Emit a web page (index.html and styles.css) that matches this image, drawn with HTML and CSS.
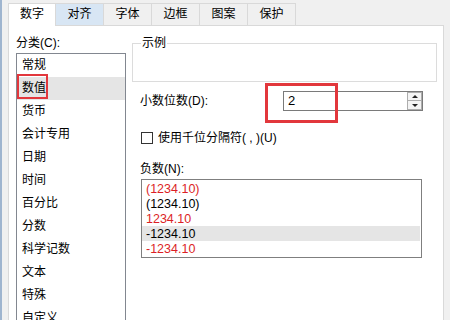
FILE: index.html
```html
<!DOCTYPE html>
<html>
<head>
    <title>设置单元格格式</title>
    <link rel="stylesheet" href="styles.css">
</head>
<body>
    <div class="window">
        <div class="tabs">
            <div class="tab active">数字</div>
            <div class="tab hover">对齐</div>
            <div class="tab">字体</div>
            <div class="tab">边框</div>
            <div class="tab">图案</div>
            <div class="tab">保护</div>
        </div>

        <div class="panel">
            <div class="category">
                <div class="label">分类(C):</div>
                <ul class="list cat-list">
                    <li>常规</li>
                    <li class="selected"><span class="mark small"></span>数值</li>
                    <li>货币</li>
                    <li>会计专用</li>
                    <li>日期</li>
                    <li>时间</li>
                    <li>百分比</li>
                    <li>分数</li>
                    <li>科学记数</li>
                    <li>文本</li>
                    <li>特殊</li>
                    <li>自定义</li>
                </ul>
            </div>

            <div class="options">
                <fieldset class="sample">
                    <legend>示例</legend>
                    <div class="sample-body"></div>
                </fieldset>

                <div class="decimals">
                    <span class="row-label">小数位数(D):</span>
                    <div class="spin">
                        <span class="spin-value">2</span>
                        <div class="spin-buttons">
                            <span class="spin-btn up"></span>
                            <span class="spin-btn down"></span>
                        </div>
                        <span class="mark big"></span>
                    </div>
                </div>

                <div class="check-row">
                    <span class="checkbox"></span>
                    <span>使用千位分隔符( , )(U)</span>
                </div>

                <div class="label neg-label">负数(N):</div>
                <ul class="list neg-list">
                    <li class="red">(1234.10)</li>
                    <li>(1234.10)</li>
                    <li class="red">1234.10</li>
                    <li class="selected">-1234.10</li>
                    <li class="red">-1234.10</li>
                </ul>
            </div>
        </div>
    </div>
</body>
</html>
```

FILE: styles.css
```css
html, body {
    margin: 0;
    height: 320px;
    overflow: hidden;
}
body {
    background-color: #f0f0f0;
    border-left: 2px solid #9fb5cf;
    font-family: "Liberation Sans", "Noto Sans CJK SC", sans-serif;
    font-size: 12px;
    line-height: 16px;
    color: #000;
}
.window {
    padding: 3px 0 0 6px;
}

/* tab strip */
.tabs {
    display: flex;
    align-items: flex-start;
    position: relative;
    z-index: 1;
    margin-bottom: -1px;
}
.tab {
    width: 49px;
    height: 22px;
    margin-left: -1px;
    box-sizing: border-box;
    border: 1px solid #d9d9d9;
    border-bottom: none;
    background-color: #f0f0f0;
    text-align: center;
    line-height: 20px;
}
.tab:first-child {
    width: 48px;
    margin-left: 0;
}
.tab.hover {
    background-color: #d8e6f4;
}
.tab.active {
    height: 23px;
    background-color: #fff;
    position: relative;
    z-index: 2;
}

/* page body */
.panel {
    width: 436px;
    height: 400px;
    box-sizing: border-box;
    background: #fff;
    border: 1px solid #d9d9d9;
    padding: 9px 0 0 7px;
    display: grid;
    grid-template-columns: 110px 305px;
    column-gap: 6px;
    align-items: start;
}
.label {
    margin-bottom: 2px;
}
.list {
    list-style: none;
    margin: 0;
    padding: 0;
    background: #fff;
}
.cat-list {
    border: 1px solid #828790;
    height: 300px;
}
.cat-list li {
    position: relative;
    height: 23px;
    line-height: 23px;
    padding-left: 5px;
}
.list li.selected {
    background-color: #e5e5e5;
}

/* red highlight boxes */
.mark {
    position: absolute;
    box-sizing: border-box;
    border: 2px solid #e2373c;
    pointer-events: none;
}
.mark.small {
    left: 0;
    top: -3px;
    width: 31px;
    height: 25px;
}
.mark.big {
    left: -19px;
    top: -9px;
    width: 73px;
    height: 40px;
    border-width: 3px;
}

/* right side */
.sample {
    margin: 0;
    padding: 0 8px;
    border: 1px solid #dcdcdc;
    min-width: 0;
}
.sample legend {
    padding: 0 1px;
    line-height: 16px;
}
.sample-body {
    height: 30px;
}
.decimals {
    display: flex;
    align-items: center;
    margin-top: 9px;
    padding-left: 8px;
}
.row-label {
    width: 143px;
}
.spin {
    position: relative;
    display: flex;
    width: 140px;
    height: 20px;
    box-sizing: border-box;
    border: 1px solid #7a7a7a;
    background: #fff;
}
.spin-value {
    flex: 1;
    padding-left: 4px;
    font-size: 13px;
    line-height: 18px;
}
.spin-buttons {
    display: flex;
    flex-direction: column;
    width: 15px;
}
.spin-btn {
    display: flex;
    align-items: center;
    justify-content: center;
    height: 9px;
    box-sizing: border-box;
    border: 1px solid #adadad;
    background: #f4f4f4;
}
.spin-btn.down {
    height: 10px;
    margin-top: -1px;
}
.spin-btn::before {
    content: "";
    border-left: 3px solid transparent;
    border-right: 3px solid transparent;
}
.spin-btn.up::before {
    border-bottom: 3px solid #222;
}
.spin-btn.down::before {
    border-top: 3px solid #222;
}
.check-row {
    display: flex;
    align-items: center;
    margin-top: 19px;
    padding-left: 9px;
}
.checkbox {
    width: 12px;
    height: 12px;
    box-sizing: border-box;
    border: 1px solid #333;
    background: #fff;
    margin-right: 5px;
}
.neg-label {
    margin-top: 15px;
    padding-left: 8px;
}
.neg-list {
    margin-left: 9px;
    width: 281px;
    box-sizing: border-box;
    border: 1px solid #7f7f7f;
    padding: 1px 1px 1px 0;
}
.neg-list li {
    height: 15px;
    line-height: 16px;
    padding-left: 4px;
    font-size: 12.5px;
}
.neg-list li.red {
    color: #dc1f26;
}
```
